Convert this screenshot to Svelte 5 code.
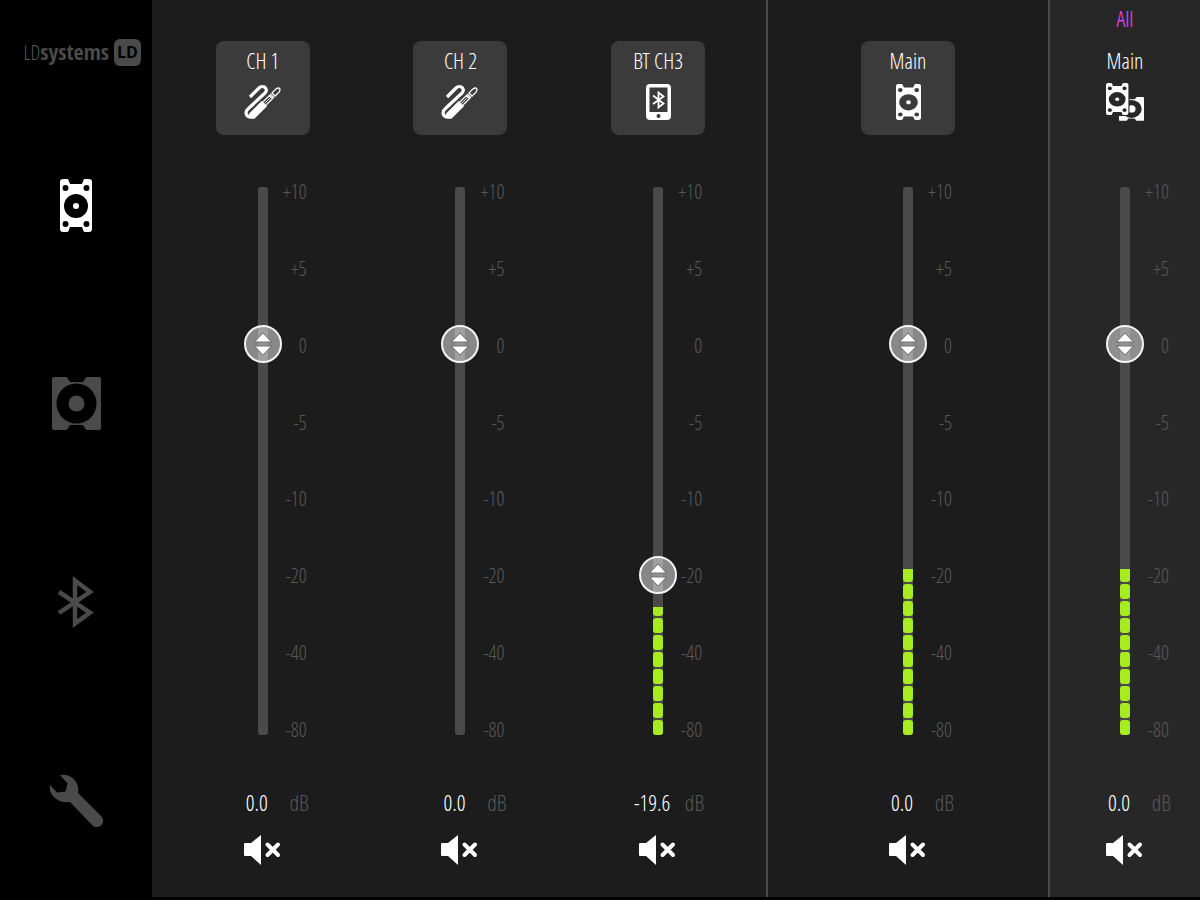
<script lang="ts">
    type Icon = "jack" | "phone" | "top" | "pair";

    interface Channel {
        id: string;
        name: string;
        icon: Icon;
        position: number;
        level: number;
        muted: boolean;
        caption?: string;
    }

    interface Group {
        id: string;
        channels: Channel[];
    }

    // dB marks from the bottom of the fader to the top, evenly spaced
    const marks = [-80, -40, -20, -10, -5, 0, 5, 10];
    const steps = marks.length - 1;
    const segments = Array.from({ length: 32 }, (_, i) => i);

    let activePage = $state("top");

    let groups: Group[] = $state([
        {
            id: "inputs",
            channels: [
                { id: "ch1", name: "CH 1", icon: "jack", position: 5, level: 0, muted: false },
                { id: "ch2", name: "CH 2", icon: "jack", position: 5, level: 0, muted: false },
                { id: "ch3", name: "BT CH3", icon: "phone", position: 2.04, level: 23.4, muted: false },
            ],
        },
        {
            id: "main",
            channels: [
                { id: "main", name: "Main", icon: "top", position: 5, level: 30.3, muted: false },
            ],
        },
        {
            id: "all",
            channels: [
                { id: "all", name: "Main", icon: "pair", position: 5, level: 30.3, muted: false, caption: "All" },
            ],
        },
    ]);

    const pages = [
        { id: "top", label: "Top speaker" },
        { id: "sub", label: "Subwoofer" },
        { id: "bluetooth", label: "Bluetooth" },
        { id: "settings", label: "Settings" },
    ];

    function toDb(position: number) {
        const i = Math.min(Math.floor(position), steps - 1);
        const db = marks[i] + (position - i) * (marks[i + 1] - marks[i]);
        return db.toFixed(1);
    }

    function formatMark(mark: number) {
        return mark > 0 ? `+${mark}` : `${mark}`;
    }
</script>

{#snippet topShape()}
    <path
        fill-rule="evenodd"
        d="M3 0H7Q8 0 8.500 1L10 5H22L23.500 1Q24 0 25 0H29Q32 0 32 3V50Q32 53 29 53H25Q24 53 23.500 52L22 48H10L8.500 52Q8 53 7 53H3Q0 53 0 50V3Q0 0 3 0ZM5.500 6a3 3 0 1 0 0 6a3 3 0 1 0 0-6ZM26.500 6a3 3 0 1 0 0 6a3 3 0 1 0 0-6ZM5.500 42a3 3 0 1 0 0 6a3 3 0 1 0 0-6ZM26.500 42a3 3 0 1 0 0 6a3 3 0 1 0 0-6ZM16 15a12 12 0 1 0 0 24a12 12 0 1 0 0-24ZM16 24a3 3 0 1 1 0 6a3 3 0 1 1 0-6Z"
    />
{/snippet}

{#snippet subShape()}
    <path
        fill-rule="evenodd"
        d="M2 0H14Q15 0 15.500 1L18 5H31L33.500 1Q34 0 35 0H47Q49 0 49 2V51Q49 53 47 53H35Q34 53 33.500 52L31 48H18L15.500 52Q15 53 14 53H2Q0 53 0 51V2Q0 0 2 0ZM24.500 6.500a20 20 0 1 0 0 40a20 20 0 1 0 0-40ZM24.500 18.500a8 8 0 1 1 0 16a8 8 0 1 1 0-16Z"
    />
{/snippet}

{#snippet channelIcon(icon: Icon)}
    {#if icon === "jack"}
        <svg viewBox="0 0 38 38" width="38" height="38" fill="none" stroke="currentColor" aria-hidden="true">
            <path d="M6 14 15 5C19 1 25 6 21 10L5 25C0 29 2 34 7 34" stroke-width="3.200" />
            <g transform="translate(8 33) rotate(-45)">
                <path d="M0-3H17V3H0L-2 1V-1Z" fill="currentColor" stroke-width="1.500" />
                <path d="M18-2.200H27V2.200H18M28.500-2.800V2.800M30.500-2.200H36Q39-1.500 39 0Q39 1.500 36 2.200H30.500Z" stroke-width="1.300" />
                <path d="M18 0H27" stroke-width="0.800" />
            </g>
        </svg>
    {:else if icon === "phone"}
        <svg viewBox="0 0 25 36" width="25" height="36" aria-hidden="true">
            <path
                fill="currentColor"
                fill-rule="evenodd"
                d="M4 0H21Q25 0 25 4V32Q25 36 21 36H4Q0 36 0 32V4Q0 0 4 0ZM3.500 3.500V28H21.500V3.500ZM12.500 30a2 2 0 1 0 0 4a2 2 0 1 0 0-4Z"
            />
            <path d="M7 11.500 17.500 19.500 12.500 23.500V8.500L17.500 12.500 7 20" fill="none" stroke="currentColor" stroke-width="1.800" />
        </svg>
    {:else if icon === "top"}
        <svg viewBox="0 0 32 53" width="25" height="36" preserveAspectRatio="none" fill="currentColor" aria-hidden="true">
            {@render topShape()}
        </svg>
    {:else}
        <svg viewBox="0 0 38 38" width="38" height="38" fill="currentColor" aria-hidden="true">
            <g transform="translate(13 14) scale(0.510 0.450)">{@render subShape()}</g>
            <rect x="-1" y="-1" width="24.500" height="34" rx="2" class="cutout" />
            <g transform="scale(0.700 0.604)">{@render topShape()}</g>
        </svg>
    {/if}
{/snippet}

<div class="app">
    <aside class="sidebar">
        <div class="logo">
            <span class="logo-text">LD<b>systems</b></span>
            <span class="logo-badge">LD</span>
        </div>
        <nav class="pages">
            {#each pages as page (page.id)}
                <button
                    class="page-btn"
                    class:active={activePage === page.id}
                    aria-label={page.label}
                    onclick={() => (activePage = page.id)}
                >
                    {#if page.id === "top"}
                        <svg viewBox="0 0 32 53" width="32" height="53" fill="currentColor">{@render topShape()}</svg>
                    {:else if page.id === "sub"}
                        <svg viewBox="0 0 49 53" width="49" height="53" fill="currentColor">{@render subShape()}</svg>
                    {:else if page.id === "bluetooth"}
                        <svg viewBox="0 0 36 54" width="36" height="54" fill="none" stroke="currentColor" stroke-width="4.500">
                            <path d="M1 17 32 37.500 17 48.500V5.500L32 17 1 38" />
                        </svg>
                    {:else}
                        <svg viewBox="0 0 54 54" width="54" height="54" fill="currentColor">
                            <path d="M11 1C22-1 31 8 29 19L52 42A6.300 6.300 0 0 1 43.500 51.500L21 28C10 30-1 21 1 11L8 18.500 16.500 17.500 18.500 9.500Z" />
                        </svg>
                    {/if}
                </button>
            {/each}
        </nav>
    </aside>

    <main class="mixer">
        {#each groups as group (group.id)}
            <section class="group {group.id}">
                {#each group.channels as channel (channel.id)}
                    <div class="channel">
                        <div class="caption">{channel.caption ?? ""}</div>
                        <button class="tile">
                            <span>{channel.name}</span>
                            <span class="tile-icon">{@render channelIcon(channel.icon)}</span>
                        </button>

                        <div class="fader">
                            <div class="track">
                                <div class="meter" style="height: {channel.level}%">
                                    {#each segments as segment (segment)}
                                        <i class="segment"></i>
                                    {/each}
                                </div>
                                <div class="knob" style="bottom: {(channel.position / steps) * 100}%">
                                    <svg viewBox="-19 -19 38 38" width="38" height="38" aria-hidden="true">
                                        <path d="M0-11 8.500-2H-8.500ZM0 11 8.500 2H-8.500Z" fill="#fff" stroke="#555" stroke-width="0.800" stroke-linejoin="round" />
                                        <path d="M-8 0H8" stroke="#888" />
                                    </svg>
                                </div>
                                <input
                                    class="range"
                                    type="range"
                                    min="0"
                                    max={steps}
                                    step="0.01"
                                    aria-label="{channel.name} level"
                                    aria-valuetext="{toDb(channel.position)} dB"
                                    bind:value={channel.position}
                                />
                            </div>
                            <div class="scale">
                                {#each [...marks].reverse() as mark (mark)}
                                    <span>{formatMark(mark)}</span>
                                {/each}
                            </div>
                        </div>

                        <div class="readout">
                            <output>{toDb(channel.position)}</output>
                            <span class="unit">dB</span>
                        </div>

                        <button
                            class="mute"
                            aria-label="Mute {channel.name}"
                            aria-pressed={channel.muted}
                            onclick={() => (channel.muted = !channel.muted)}
                        >
                            <svg viewBox="0 0 38 30" width="38" height="30" aria-hidden="true">
                                <path d="M1 8H7L17 0V30L7 21H1Q0 21 0 20V9Q0 8 1 8Z" fill="currentColor" />
                                <path d="M23.500 9.500 34 20M34 9.500 23.500 20" stroke="currentColor" stroke-width="4" stroke-linecap="round" />
                            </svg>
                        </button>
                    </div>
                {/each}
            </section>
        {/each}
    </main>
</div>

<style>
    :global(body) {
        margin: 0;
        background: #000;
    }

    .app {
        --panel: #1c1c1c;
        --panel-light: #272727;
        --tile: #3b3b3b;
        --dim: #4a4a4a;
        --dim-text: #585858;
        --green: #a6ec1e;
        display: flex;
        min-height: 100vh;
        background: #000;
        color: #fff;
        font-family: "Open Sans Condensed Light", "Roboto Condensed Light", "Roboto Condensed", "Liberation Sans Narrow", sans-serif;
        font-size: 22px;
        font-weight: 300;
    }

    button {
        display: flex;
        align-items: center;
        justify-content: center;
        padding: 0;
        border: none;
        background: none;
        color: inherit;
        font: inherit;
        cursor: pointer;
    }

    svg {
        display: block;
    }

    .sidebar {
        display: flex;
        flex-direction: column;
        flex: 0 0 152px;
        color: var(--dim);
    }

    .logo {
        display: flex;
        align-items: center;
        justify-content: flex-end;
        gap: 5px;
        height: 28px;
        padding: 38px 11px 0 0;
    }

    .logo-text {
        color: var(--dim-text);
        font-size: 20px;
        line-height: 28px;
    }

    .logo-text b {
        color: var(--dim);
        font-family: "Open Sans Condensed", "Roboto Condensed", sans-serif;
        font-size: 22px;
        font-weight: 700;
    }

    .logo-badge {
        display: flex;
        align-items: center;
        justify-content: center;
        width: 27px;
        height: 27px;
        border-radius: 6px;
        background: var(--dim);
        color: #000;
        font-family: "Open Sans", sans-serif;
        font-size: 16px;
        font-weight: 700;
    }

    .pages {
        display: flex;
        flex: 1;
        flex-direction: column;
        align-items: center;
        justify-content: space-between;
        padding: 112px 0 72px;
    }

    .page-btn {
        width: 54px;
        height: 54px;
    }

    .page-btn.active {
        color: #fff;
    }

    .mixer {
        display: grid;
        grid-template-columns: 616fr 282fr 150fr;
        flex: 1;
        margin-bottom: 3px;
    }

    .group {
        display: flex;
        justify-content: space-around;
        background: var(--panel);
    }

    .group + .group {
        box-shadow: -2px 0 0 var(--dim);
    }

    .inputs {
        padding: 0 11px 0 12px;
    }

    .main {
        padding-right: 2px;
    }

    .all {
        --tile: transparent;
        background: var(--panel-light);
    }

    .channel {
        display: flex;
        flex-direction: column;
        align-items: center;
        width: 94px;
        padding-bottom: 32px;
    }

    .caption {
        height: 41px;
        color: #ff40ff;
        line-height: 36px;
    }

    .tile {
        flex-direction: column;
        justify-content: flex-start;
        gap: 12px;
        width: 94px;
        height: 94px;
        padding-top: 8px;
        border-radius: 8px;
        background: var(--tile);
        line-height: 22px;
    }

    .tile-icon {
        display: flex;
        align-items: center;
        height: 38px;
    }

    .cutout {
        fill: var(--panel-light);
    }

    .fader {
        display: grid;
        grid-template-columns: 1fr 10px 1fr;
        flex: 1;
        width: 94px;
        min-height: 400px;
        margin: 52px 0 55px;
    }

    .track {
        position: relative;
        grid-column: 2;
        border-radius: 3px;
        background: var(--dim);
    }

    .meter {
        position: absolute;
        right: 0;
        bottom: 0;
        left: 0;
        display: flex;
        flex-direction: column-reverse;
        gap: 2px;
        overflow: hidden;
    }

    .segment {
        flex: 0 0 15px;
        border-radius: 3px;
        background: var(--green);
    }

    .knob {
        position: absolute;
        left: 50%;
        z-index: 1;
        box-sizing: border-box;
        width: 38px;
        height: 38px;
        border: 2px solid #f4f4f4;
        border-radius: 50%;
        background: rgba(255, 255, 255, 0.48);
        transform: translate(-50%, 50%);
    }

    .knob svg {
        margin: -2px;
    }

    .range {
        position: absolute;
        top: -19px;
        left: -14px;
        z-index: 2;
        width: 38px;
        height: calc(100% + 38px);
        margin: 0;
        background: transparent;
        appearance: none;
        writing-mode: vertical-lr;
        direction: rtl;
        cursor: pointer;
    }

    .range::-webkit-slider-thumb {
        width: 38px;
        height: 38px;
        border-radius: 50%;
        background: transparent;
        appearance: none;
    }

    .scale {
        display: flex;
        flex-direction: column;
        justify-content: space-between;
        padding-right: 3px;
        color: var(--dim-text);
        font-size: 20px;
        line-height: 10px;
        text-align: right;
    }

    .readout {
        display: flex;
        box-sizing: border-box;
        width: 94px;
        padding-left: 12px;
        line-height: 24px;
    }

    .readout output {
        width: 58px;
        text-align: center;
    }

    .unit {
        flex: 1;
        padding-right: 1px;
        color: var(--dim-text);
        text-align: right;
    }

    .mute {
        width: 38px;
        height: 30px;
        margin-top: 21px;
    }
</style>
